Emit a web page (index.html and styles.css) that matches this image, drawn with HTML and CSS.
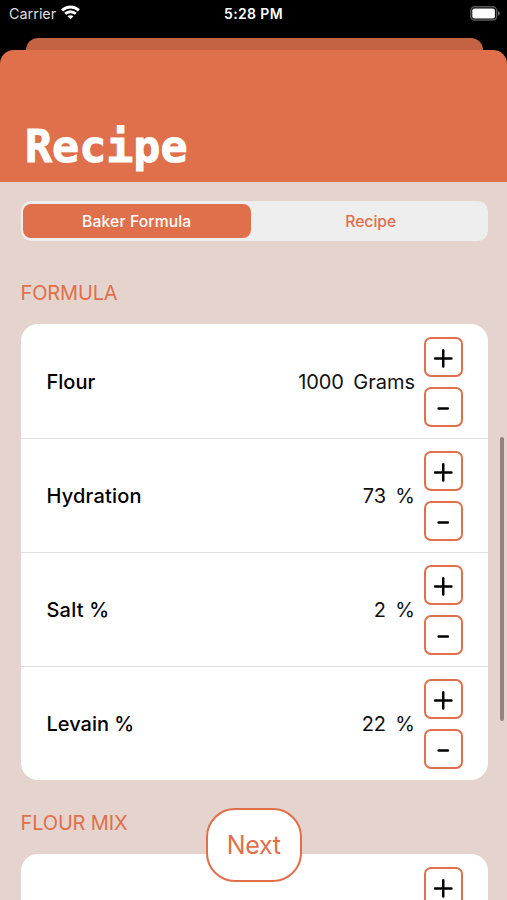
FILE: index.html
```
<!DOCTYPE html>
<html lang="en">
<head>
<meta charset="utf-8">
<title>Recipe</title>
<link rel="stylesheet" href="styles.css">
</head>
<body>
<div class="phone">
  <div class="status">
    <div class="carrier"><span>Carrier</span>
      <svg class="wifi" width="19" height="15" viewBox="0 0 19 15" fill="none" stroke="#fff" stroke-width="2.9"><path d="M1.1 5.4C5.8.8 13.2.8 17.9 5.4"/><path d="M4.2 8.8C7.1 6 11.9 6 14.8 8.8"/><path d="M9.5 14.2 6.5 11.3C8.2 9.8 10.8 9.8 12.5 11.3Z" fill="#fff" stroke="none"/></svg>
    </div>
    <div class="time">5:28 PM</div>
    <svg class="battery" width="31" height="15" viewBox="0 0 31 15"><rect x=".8" y=".8" width="25.8" height="13.2" rx="3.8" fill="none" stroke="#58585a" stroke-width="1.5"/><rect x="2.3" y="2.4" width="22.6" height="10" rx="2" fill="#fff"/><path d="M28 5.2C30.4 5.8 30.4 9 28 9.6Z" fill="#69696b"/></svg>
  </div>
  <div class="sheet-behind"></div>
  <header class="header"><h1>Recipe</h1></header>
  <main class="content">
    <div class="segments"><div class="segment active"><span>Baker Formula</span></div><div class="segment inactive"><span>Recipe</span></div></div>
    <h2 class="formula-title">FORMULA</h2>
    <section class="card">
      <div class="row"><span class="label">Flour</span><span class="value">1000</span><span class="unit">Grams</span><div class="stepper"><button><svg viewBox="0 0 36 36"><path d="M9.2 19.7H25.8M17.5 11.4V28"/></svg></button><button><svg viewBox="0 0 36 36"><path d="M12.8 19.7H22.2"/></svg></button></div></div>
      <div class="row"><span class="label wide">Hydration</span><span class="value">73</span><span class="unit">%</span><div class="stepper"><button><svg viewBox="0 0 36 36"><path d="M9.2 19.7H25.8M17.5 11.4V28"/></svg></button><button><svg viewBox="0 0 36 36"><path d="M12.8 19.7H22.2"/></svg></button></div></div>
      <div class="row"><span class="label wide">Salt %</span><span class="value">2</span><span class="unit">%</span><div class="stepper"><button><svg viewBox="0 0 36 36"><path d="M9.2 19.7H25.8M17.5 11.4V28"/></svg></button><button><svg viewBox="0 0 36 36"><path d="M12.8 19.7H22.2"/></svg></button></div></div>
      <div class="row"><span class="label">Levain %</span><span class="value">22</span><span class="unit">%</span><div class="stepper"><button><svg viewBox="0 0 36 36"><path d="M9.2 19.7H25.8M17.5 11.4V28"/></svg></button><button><svg viewBox="0 0 36 36"><path d="M12.8 19.7H22.2"/></svg></button></div></div>
    </section>
    <h2 class="mix-title">FLOUR MIX</h2>
    <section class="card">
      <div class="row"><div class="stepper"><button><svg viewBox="0 0 36 36"><path d="M9.2 19.7H25.8M17.5 11.4V28"/></svg></button><button><svg viewBox="0 0 36 36"><path d="M12.8 19.7H22.2"/></svg></button></div></div>
    </section>
  </main>
  <div class="scrollbar"></div>
  <button class="next">Next</button>
</div>
</body>
</html>
```
FILE: styles.css
```
* { box-sizing: border-box; }
body { margin: 0; background: #000; font-family: Inter, "Liberation Sans", sans-serif; }
button { font-family: inherit; padding: 0; margin: 0; }
.phone { position: relative; width: 507px; height: 900px; overflow: hidden; background: #000; display: flex; flex-direction: column; }
.status { height: 38px; flex: none; display: grid; grid-template-columns: 1fr auto 1fr; padding: 0 6px 0 9px; color: #fff; }
.carrier { display: flex; gap: 5px; font-size: 14.4px; line-height: 28px; color: #dedede; }
.wifi { margin-top: 5px; }
.time { font-size: 14px; font-weight: 600; line-height: 28px; letter-spacing: .35px; margin-left: -3px; }
.battery { justify-self: end; margin-top: 6px; }
.sheet-behind { flex: none; height: 12px; margin: 0 24.5px 0 25.5px; border-radius: 12px 12px 0 0; background: #c46343; }
.header { flex: none; height: 132px; border-radius: 14px 14px 0 0; background: #df704b; padding-left: 25px; }
.header h1 { margin: 0; padding-top: 70px; font: bold 45px/54px "DejaVu Sans Mono", monospace; color: #fff; -webkit-text-stroke: 1px #fff; }
.content { flex: 1; min-height: 0; overflow: hidden; background: #e5d4ce; padding: 19px 19.5px 0 20.5px; }
.segments { display: flex; height: 39.5px; border-radius: 10px; background: #eee; padding: 2.5px; }
.segment { flex: 1; display: flex; align-items: center; justify-content: center; padding-top: 1px; color: #df704b; font-size: 15.7px; font-weight: 500; border-radius: 8px; }
.segment.active { flex: 0 0 227.5px; background: #df704b; color: #fff; letter-spacing: .12px; }
.segment.inactive { padding-left: 6px; }
h2 { margin: 0; font-size: 20px; line-height: 26px; font-weight: 400; color: #df704b; letter-spacing: -.15px; }
.formula-title { padding-top: 39.5px; height: 83.5px; }
.mix-title { padding-top: 30px; height: 74px; }
.card { background: #fff; border-radius: 17px; overflow: hidden; }
.row { height: 114px; display: flex; align-items: center; padding: 1.5px 24.5px 0 26px; font-size: 20px; color: #111; }
.row + .row { padding-top: .5px; border-top: 1px solid #e2e2e2; }
.label { font-weight: 500; color: #000; letter-spacing: 0; }
.label.wide { letter-spacing: .2px; }
.value { margin-left: auto; letter-spacing: -.15px; }
.unit { margin-left: 9.5px; margin-right: 8.5px; }
.stepper { display: flex; flex-direction: column; gap: 10.5px; }
.row > .stepper:only-child { margin-left: auto; }
.stepper button { width: 39.5px; height: 39.5px; border: 2px solid #df704b; border-radius: 7px; background: #fff; display: block; }
.stepper svg { display: block; width: 35.5px; height: 35.5px; fill: none; stroke: #000; stroke-width: 2.5; stroke-linecap: round; }
.scrollbar { position: absolute; right: 3.5px; top: 437px; width: 4px; height: 283.5px; border-radius: 2px; background: #91837f; }
.next { position: absolute; left: 205.5px; top: 808px; width: 96.5px; height: 74px; border: 2px solid #df704b; border-radius: 29px; background: #fff; color: #df704b; font-size: 25px; letter-spacing: -.3px; }
```
